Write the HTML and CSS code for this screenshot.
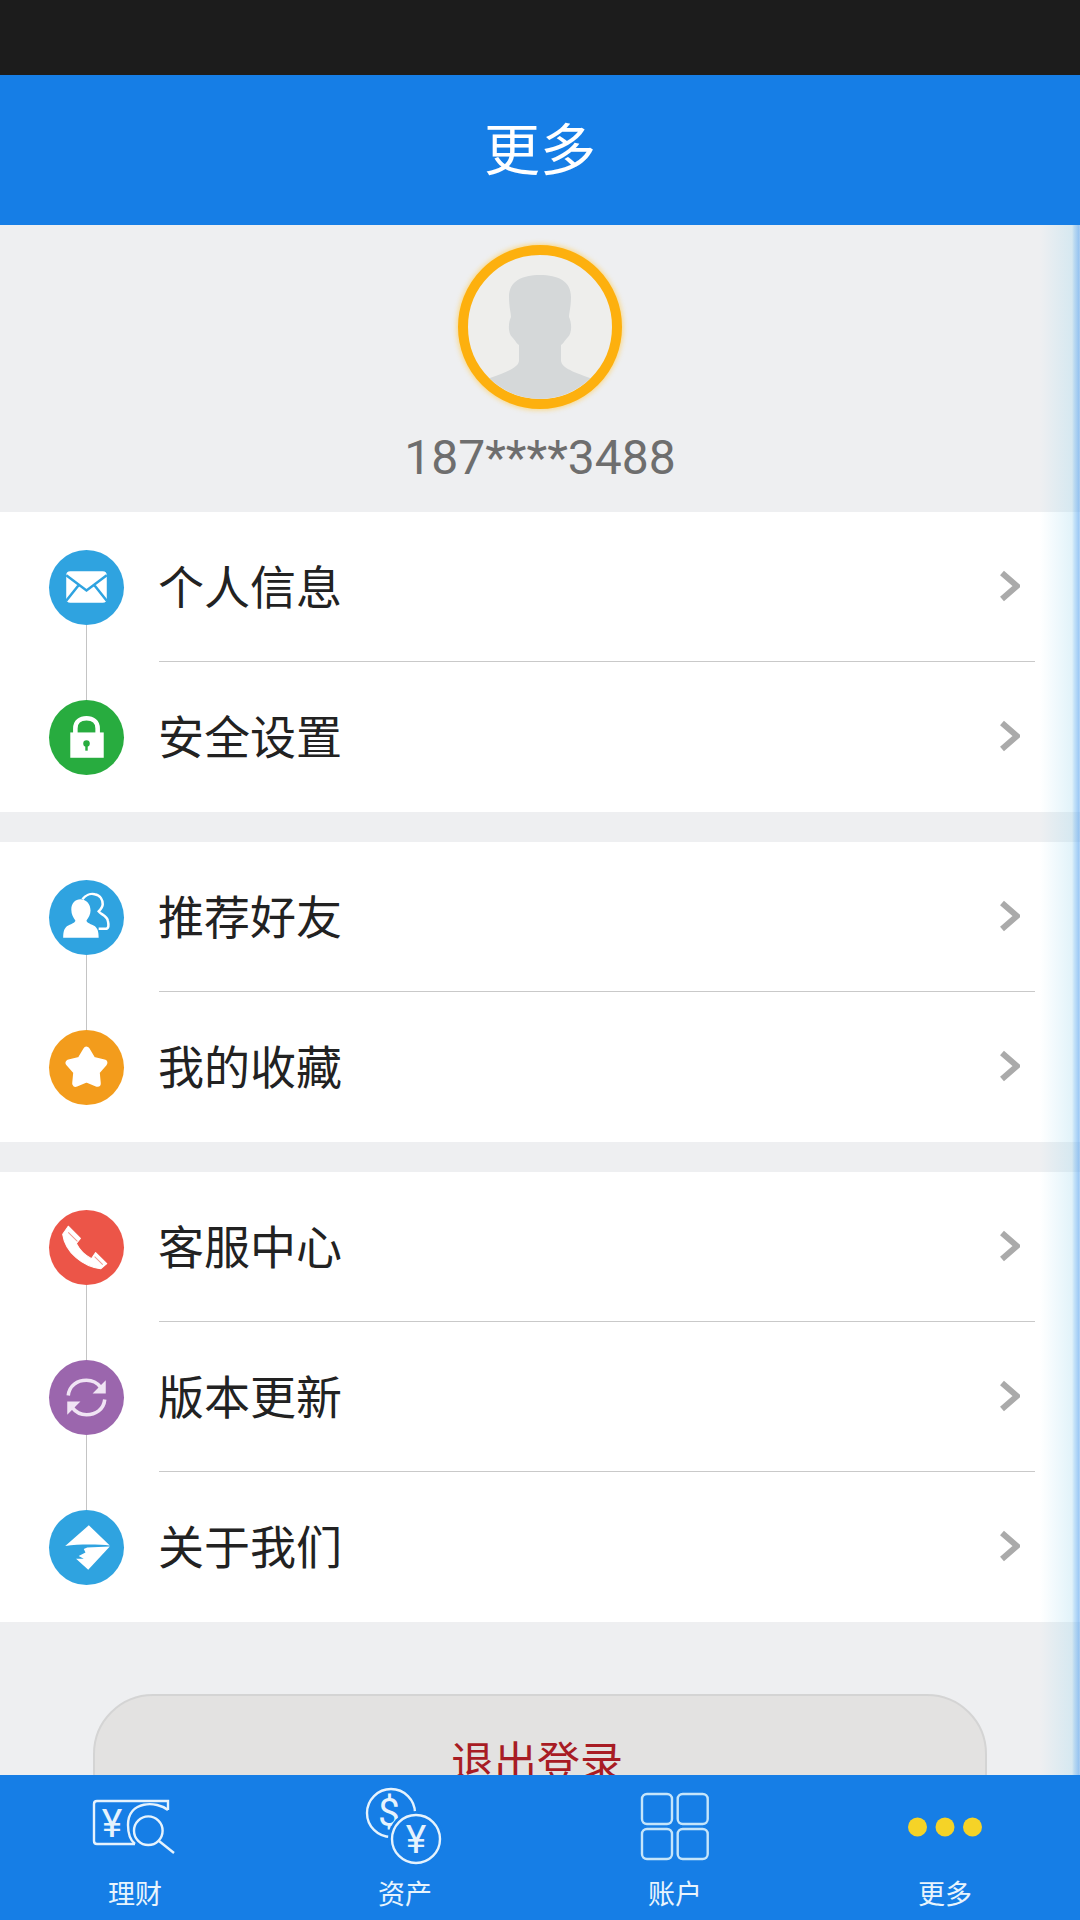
FILE: index.html
```html
<!DOCTYPE html>
<html lang="zh-CN">
<head>
    <meta charset="UTF-8">
    <meta name="viewport" content="width=device-width, initial-scale=1.0">
    <title>更多</title>
    <link rel="stylesheet" href="styles.css">
</head>
<body>
    <div class="status-bar"></div>
    <div class="header"><span class="header-title">更多</span></div>

    <div class="content">
        <!-- Profile -->
        <div class="profile">
            <div class="avatar">
                <svg viewBox="10 10 144 144" width="144" height="144">
                    <path fill="#d5d8d9" d="M82 30C100 30 113 36 113 52C113 62 111 68 111 72C114 78 114 88 110 92C106 96 106 98 103 100L103 116C104 122 112 126 132 133L132 170L32 170L32 133C52 126 60 122 61 116L61 100C58 98 58 96 54 92C50 88 50 78 53 72C53 68 51 62 51 52C51 36 64 30 82 30Z"/>
                </svg>
            </div>
            <div class="phone">187****3488</div>
        </div>

        <!-- Menu groups -->
        <div class="group">
            <div class="row">
                <div class="icon icon-blue">
                    <svg viewBox="0 0 74 74">
                        <rect x="17" y="21" width="40" height="31" rx="4" fill="#fff"/>
                        <path d="M17 25L37 40L57 25M17 50L29 35M57 50L45 35" fill="none" stroke="#2fa3e0" stroke-width="2.500"/>
                    </svg>
                </div>
                <div class="row-body"><span class="row-label">个人信息</span><svg class="chevron" viewBox="0 0 21 32"><path d="M3 3L18 16L3 29"/></svg></div>
            </div>
            <div class="row">
                <div class="icon icon-green">
                    <svg viewBox="0 0 74 74">
                        <path d="M26 34V28C26 21 31 18 37 18C43 18 48 21 48 28V34" fill="none" stroke="#fff" stroke-width="4.500"/>
                        <rect x="21" y="32" width="33" height="25" fill="#fff"/>
                        <circle cx="37" cy="43" r="3.200" fill="#28ac3f"/>
                        <rect x="35.800" y="44" width="2.400" height="6" fill="#28ac3f"/>
                    </svg>
                </div>
                <div class="row-body"><span class="row-label">安全设置</span><svg class="chevron" viewBox="0 0 21 32"><path d="M3 3L18 16L3 29"/></svg></div>
            </div>
        </div>

        <div class="group">
            <div class="row">
                <div class="icon icon-blue">
                    <svg viewBox="0 0 74 74">
                        <path d="M33 19C36 15 41 13 45 14C51 15 53 20 53 24C53 27 51 29 49 31C51 34 57 35 58 40C59 44 59 47 57 48H49" fill="none" stroke="#fff" stroke-width="2.500"/>
                        <path d="M31 19C37 19 41 24 41 30C41 34 39 37 37 40C37 42 40 43 44 45C48 47 49 51 49 57H14C14 51 15 47 19 45C23 43 26 42 26 40C24 37 22 34 22 29C22 23 26 19 31 19Z" fill="#fff"/>
                    </svg>
                </div>
                <div class="row-body"><span class="row-label">推荐好友</span><svg class="chevron" viewBox="0 0 21 32"><path d="M3 3L18 16L3 29"/></svg></div>
            </div>
            <div class="row">
                <div class="icon icon-orange">
                    <svg viewBox="0 0 74 74">
                        <path d="M37 20L42.900 29.900L54.100 32.400L46.500 41.100L47.600 52.600L37 48L26.400 52.600L27.500 41.100L19.900 32.400L31.100 29.900Z" fill="#fff" stroke="#fff" stroke-width="7" stroke-linejoin="round"/>
                    </svg>
                </div>
                <div class="row-body"><span class="row-label">我的收藏</span><svg class="chevron" viewBox="0 0 21 32"><path d="M3 3L18 16L3 29"/></svg></div>
            </div>
        </div>

        <div class="group">
            <div class="row">
                <div class="icon icon-red">
                    <svg viewBox="0 0 74 74">
                        <path fill="#fff" stroke="#fff" stroke-linejoin="round" d="M19 16L31 28L27 33C30 39 36 45 42 48L46 42L57 53L51 58C34 56 16 42 13.500 24Z"/>
                        <path d="M19 22L28 31M45 46L53 54" fill="none" stroke="#f09a92" stroke-width="1"/>
                    </svg>
                </div>
                <div class="row-body"><span class="row-label">客服中心</span><svg class="chevron" viewBox="0 0 21 32"><path d="M3 3L18 16L3 29"/></svg></div>
            </div>
            <div class="row">
                <div class="icon icon-purple">
                    <svg viewBox="0 0 74 74">
                        <path d="M19 35C20 25 28 20 37 20C44 20 48 23 51 27" fill="none" stroke="#f0e4f4" stroke-width="3.500"/>
                        <path d="M55 39C54 49 46 54 37 54C30 54 26 51 23 47" fill="none" stroke="#f0e4f4" stroke-width="3.500"/>
                        <path d="M56 20V33H43Z M18 54V41H31Z" fill="#f0e4f4"/>
                    </svg>
                </div>
                <div class="row-body"><span class="row-label">版本更新</span><svg class="chevron" viewBox="0 0 21 32"><path d="M3 3L18 16L3 29"/></svg></div>
            </div>
            <div class="row">
                <div class="icon icon-blue">
                    <svg viewBox="0 0 74 74">
                        <path d="M39.300 15L60 35C50 34 30 33.500 16 35.500Z" fill="#fff"/>
                        <path d="M60 36L38.700 59L26.700 48L34.300 48L29.300 45.500L36 42L34.300 38.500L37.700 37Z" fill="#fff"/>
                    </svg>
                </div>
                <div class="row-body"><span class="row-label">关于我们</span><svg class="chevron" viewBox="0 0 21 32"><path d="M3 3L18 16L3 29"/></svg></div>
            </div>
        </div>

        <div class="logout-btn"><span class="logout-text">退出登录</span></div>
    </div>

    <!-- Bottom tabs -->
    <div class="tabbar">
        <div class="tab">
            <svg class="tab-icon" viewBox="0 0 100 80">
                <path d="M83 24V15H12Q9 15 9 18V55Q9 58 12 58H50"/>
                <path d="M83 24C72 15 43 14 43 39C43 47 45 54 50 58"/>
                <circle cx="63.300" cy="44.700" r="14.300"/>
                <path d="M74 55L89 67"/>
                <text class="tab-sign" x="27" y="51">¥</text>
            </svg>
            <span class="tab-label">理财</span>
        </div>
        <div class="tab">
            <svg class="tab-icon" viewBox="0 0 100 80">
                <circle cx="36" cy="27" r="24"/>
                <text class="tab-sign" x="34" y="40">$</text>
                <circle class="tab-gap" cx="61" cy="53" r="28"/>
                <circle cx="61" cy="53" r="24"/>
                <text class="tab-sign" x="61" y="67">¥</text>
            </svg>
            <span class="tab-label">资产</span>
        </div>
        <div class="tab">
            <svg class="tab-icon tab-icon-pale" viewBox="0 0 100 80">
                <rect x="17" y="8" width="30" height="30" rx="5"/>
                <rect x="52.700" y="8" width="30" height="30" rx="5"/>
                <rect x="17" y="43" width="30" height="30" rx="5"/>
                <rect x="52.700" y="43" width="30" height="30" rx="5"/>
            </svg>
            <span class="tab-label">账户</span>
        </div>
        <div class="tab">
            <svg class="tab-icon" viewBox="0 0 100 80">
                <circle class="tab-dot" cx="22.500" cy="41" r="9.500"/>
                <circle class="tab-dot" cx="50" cy="41" r="9.500"/>
                <circle class="tab-dot" cx="77.500" cy="41" r="9.500"/>
            </svg>
            <span class="tab-label">更多</span>
        </div>
    </div>
</body>
</html>
```

FILE: styles.css
```css
html, body {
    height: 100%;
}

body {
    width: 1080px;
    height: 1920px;
    margin: 0;
    display: flex;
    flex-direction: column;
    overflow: hidden;
    font-family: "Noto Sans CJK SC", "Noto Sans", sans-serif;
    background: #eeeff1;
}

.status-bar {
    height: 75px;
    background: #1c1c1c;
}

.header {
    height: 150px;
    display: flex;
    align-items: center;
    justify-content: center;
    background: #167ee6;
    color: #fff;
    font-size: 56px;
}

.header-title {
    margin-bottom: 10px;
}

.content {
    position: relative;
    flex: 1;
    min-height: 0;
    overflow: hidden;
}

/* soft bluish edge on the right of the scrolling area */
.content::after {
    content: "";
    position: absolute;
    top: 0;
    right: 0;
    bottom: 0;
    width: 40px;
    background: linear-gradient(90deg, rgba(170, 220, 240, 0), rgba(170, 220, 240, 0.35) 80%, rgba(130, 195, 240, 0.45) 85%, rgba(100, 170, 240, 0.65) 98%, rgba(100, 170, 240, 0.3));
}

.profile {
    height: 287px;
    box-sizing: border-box;
    padding-top: 20px;
    display: flex;
    flex-direction: column;
    align-items: center;
}

.avatar {
    width: 144px;
    height: 144px;
    border: 10px solid #fdb00e;
    border-radius: 50%;
    background: #eeeeec;
    box-shadow: 0 0 5px 1px rgba(253, 205, 90, 0.75);
    overflow: hidden;
}

.avatar svg {
    display: block;
}

.phone {
    margin-top: 21px;
    font-family: Roboto, sans-serif;
    font-size: 48px;
    line-height: 56px;
    color: #6e6e6e;
}

.group {
    margin-bottom: 30px;
    background: #fff;
}

.row {
    display: flex;
    align-items: center;
    height: 150px;
    padding-left: 49px;
}

.icon {
    position: relative;
    flex: none;
    width: 75px;
    height: 75px;
    margin-right: 35px;
    border-radius: 50%;
}

.icon svg {
    display: block;
    width: 75px;
    height: 75px;
}

.row:not(:last-child) .icon::after {
    content: "";
    position: absolute;
    top: 75px;
    left: 37px;
    width: 1px;
    height: 75px;
    background: #c4c4c4;
}

.icon-blue { background: #2fa3e0; }
.icon-green { background: #28ac3f; }
.icon-orange { background: #f39c1c; }
.icon-red { background: #ec5548; }
.icon-purple { background: #9b66ad; }

.row-body {
    flex: 1;
    height: 100%;
    box-sizing: border-box;
    margin-right: 45px;
    padding-right: 15px;
    display: flex;
    align-items: center;
    justify-content: space-between;
}

.row:not(:last-child) .row-body {
    border-bottom: 1px solid #c9c9c9;
}

.row-label {
    margin-bottom: 6px;
    margin-left: -1px;
    font-size: 46px;
    color: #222;
}

.chevron {
    width: 21px;
    height: 32px;
    margin-bottom: 2px;
    fill: none;
    stroke: #aaa;
    stroke-width: 6;
}

.logout-btn {
    height: 134px;
    margin: 72px 93px 0;
    padding-right: 6px;
    display: flex;
    align-items: center;
    justify-content: center;
    border: 2px solid #d4d4d4;
    border-radius: 60px;
    background: #e3e2e1;
    color: #a81c24;
    font-size: 43px;
}

.logout-text {
    margin-bottom: 8px;
}

.tabbar {
    height: 145px;
    flex: none;
    display: flex;
    background: #167ee6;
}

.tab {
    flex: 1;
    display: flex;
    flex-direction: column;
    align-items: center;
    padding-top: 11px;
}

.tab-icon {
    width: 100px;
    height: 80px;
    fill: none;
    stroke: #e6f3fd;
    stroke-width: 2.400;
}

.tab-icon-pale {
    stroke: #c5e5fa;
}

.tab-sign {
    fill: #e6f3fd;
    stroke: none;
    font-family: Roboto, sans-serif;
    font-size: 39px;
    font-weight: 400;
    text-anchor: middle;
}

.tab-gap {
    fill: #167ee6;
    stroke: none;
}

.tab-dot {
    fill: #f5d327;
    stroke: none;
}

.tab-label {
    margin-top: 7px;
    font-size: 27px;
    line-height: 40px;
    color: #e8f4fd;
}
```
